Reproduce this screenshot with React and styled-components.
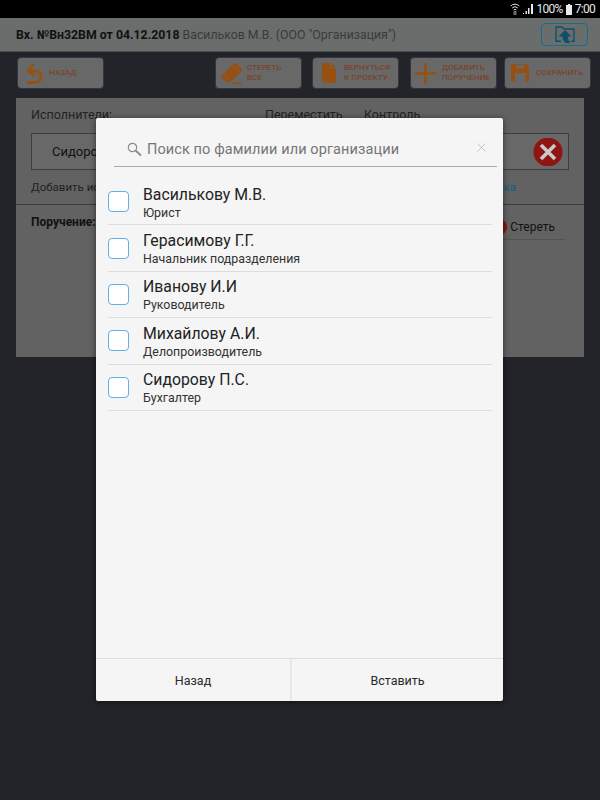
import React from 'react'
import styled, { createGlobalStyle } from 'styled-components'

const Global = createGlobalStyle`
  html, body {
    margin: 0;
    padding: 0;
    background: #22242a;
  }
  * { box-sizing: border-box; }
`;

const Page = styled.div`
  position: relative;
  width: 600px;
  height: 800px;
  overflow: hidden;
  background: #22242a;
  font-family: Roboto, "Liberation Sans", sans-serif;
  display: flex;
  flex-direction: column;
`;

const StatusBar = styled.div`
  height: 18px;
  background: #000;
  color: #e8e8e8;
  display: flex;
  align-items: center;
  justify-content: flex-end;
  gap: 3px;
  padding-right: 5px;
  font-size: 12px;
  letter-spacing: -0.7px;
`;

const Header = styled.div`
  height: 34px;
  background: #696d6c;
  border-bottom: 1px solid #4a4c4e;
  display: flex;
  align-items: center;
  justify-content: space-between;
  padding: 0 12px 0 16px;
`;

const Title = styled.div`
  font-size: 12.3px;
  color: #111;
  font-weight: 700;
  white-space: nowrap;
  span {
    font-weight: 400;
    color: #3a3a3a;
  }
`;

const FolderBtn = styled.div`
  width: 47px;
  height: 23px;
  border: 1px solid #1a6c8f;
  border-radius: 4px;
  display: flex;
  align-items: center;
  justify-content: center;
`;

const Toolbar = styled.div`
  display: flex;
  padding: 5px 9px 0 17px;
`;

const ToolBtn = styled.div`
  width: 87px;
  height: 32px;
  margin-left: ${p => p.$left || 0}px;
  margin-right: ${p => (p.$first ? 'auto' : '0')};
  background: #686868;
  border: 1px solid #33353f;
  border-radius: 4px;
  display: flex;
  align-items: center;
  gap: ${p => p.$gap || 4}px;
  padding-left: ${p => p.$pad || 5}px;
`;

const ToolText = styled.div`
  font-size: 8px;
  line-height: 10px;
  letter-spacing: 0.1px;
  color: #7e3a18;
`;

const Panel = styled.div`
  margin: 9px 16px 0;
  height: 259px;
  background: #626262;
  display: flex;
  flex-direction: column;
`;

const ColumnsRow = styled.div`
  display: flex;
  padding: 9px 0 0 15px;
  height: 35px;
  font-size: 12.5px;
  color: #222;
`;

const ColumnLabel = styled.div`
  width: ${p => p.$width}px;
`;

const ExecutorBox = styled.div`
  margin: 0 15px;
  height: 37px;
  border: 1px solid #3e3e3e;
  background: #686868;
  display: flex;
  align-items: center;
  justify-content: space-between;
  padding: 0 5px 0 20px;
  font-size: 13px;
  color: #111;
`;

const AddRow = styled.div`
  display: flex;
  justify-content: space-between;
  padding: 10px 68px 0 15px;
  height: 35px;
  font-size: 11.5px;
  color: #222;
  border-bottom: 1px solid #3c3c3c;
`;

const AddLink = styled.span`
  color: #0d5f7f;
`;

const OrderRow = styled.div`
  display: flex;
  justify-content: space-between;
  padding: 10px 19px 0 15px;
  font-size: 12px;
  color: #111;
`;

const OrderTitle = styled.div`
  font-weight: 700;
`;

const EraseBlock = styled.div`
  width: 76px;
  height: 25px;
  padding-right: 10px;
  border-bottom: 1px solid #545454;
  display: flex;
  align-items: center;
  justify-content: flex-end;
  gap: 3px;
  font-size: 12px;
`;

const Dot = styled.div`
  width: 16px;
  height: 16px;
  border-radius: 50%;
  background: #8f1414;
`;

const Modal = styled.div`
  position: absolute;
  left: 96px;
  top: 118px;
  width: 407px;
  height: 583px;
  background: #f5f5f5;
  border-radius: 2px;
  box-shadow: 0 1px 6px rgba(0, 0, 0, 0.55);
  display: flex;
  flex-direction: column;
`;

const SearchBar = styled.div`
  margin: 14px 6px 0 18px;
  height: 35px;
  border-bottom: 1px solid #a8a8a8;
  display: flex;
  align-items: center;
  padding: 0 11px 0 13px;
  gap: 5px;
  font-size: 14.5px;
  letter-spacing: 0.1px;
  color: #757575;
`;

const SearchText = styled.div`
  flex: 1;
`;

const List = styled.div`
  flex: 1;
  padding: 12px 11px 0 12px;
`;

const Row = styled.div`
  height: 46.4px;
  padding-top: 2px;
  border-bottom: 1px solid #dcdcdc;
  display: flex;
  align-items: center;
  gap: 14px;
`;

const CheckBox = styled.div`
  width: 21px;
  height: 21px;
  margin-top: -2px;
  border: 1px solid #5fb0e6;
  border-radius: 4px;
  background: #fff;
`;

const Name = styled.div`
  font-size: 15.8px;
  line-height: 19px;
  color: #222;
`;

const Role = styled.div`
  font-size: 12.4px;
  line-height: 17px;
  color: #333;
`;

const Footer = styled.div`
  height: 43px;
  border-top: 1px solid #dedede;
  display: flex;
`;

const FooterBtn = styled.div`
  width: ${p => p.$width}px;
  flex: ${p => (p.$width ? 'none' : 1)};
  display: flex;
  align-items: center;
  justify-content: center;
  font-size: 12.5px;
  color: #2a2a2a;
  border-right: ${p => (p.$width ? '2px solid #e8e8e8' : 'none')};
`;

const orange = '#97500f'
const btnBg = '#686868'

const BackIcon = () => (
  <svg width="17" height="21" viewBox="0 0 17 21">
    <path d="M7.5 1 L2 7.5 L8.5 13" fill="none" stroke={orange} strokeWidth="2.6" />
    <path d="M3 8 H9.5 a5.5 5.5 0 0 1 0 11.5 H1" fill="none" stroke={orange} strokeWidth="2.8" />
  </svg>
)

const EraserIcon = () => (
  <svg width="22" height="21" viewBox="0 0 22 21">
    <path d="M0.5 13 L12.5 1 a2 2 0 0 1 3 0 L20.5 5.5 a2 2 0 0 1 0 3 L8.5 19.5 a1.5 1.5 0 0 1 -2 0 L0.5 15 Z" fill={orange} />
    <path d="M3 11.5 L8.5 17 M11.5 3 L18 8.5" stroke={btnBg} strokeWidth="0.8" fill="none" />
    <path d="M11 20.2 H21" stroke={orange} strokeWidth="1.4" />
  </svg>
)

const DocIcon = () => (
  <svg width="14" height="20" viewBox="0 0 14 20">
    <path d="M0 0 H8 V5.5 H14 V17 a3 3 0 0 1 -3 3 H0 Z" fill={orange} />
    <path d="M9 0 L14 4.5 H9 Z" fill={orange} />
    <path d="M0 15.5 a4.5 4.5 0 0 1 4.5 4.5 M0 18 a2 2 0 0 1 2 2" fill="none" stroke={btnBg} strokeWidth="0.9" />
  </svg>
)

const PlusIcon = () => (
  <svg width="21" height="21" viewBox="0 0 21 21">
    <path d="M10.5 0 V21 M0 10.5 H21" stroke={orange} strokeWidth="2.6" />
  </svg>
)

const SaveIcon = () => (
  <svg width="18" height="18" viewBox="0 0 18 18">
    <path d="M2 0 H15 L18 3 V16 a2 2 0 0 1 -2 2 H2 a2 2 0 0 1 -2 -2 V2 a2 2 0 0 1 2 -2 Z" fill={orange} />
    <rect x="5" y="1" width="8" height="3.5" fill={btnBg} />
    <rect x="4" y="9" width="10.5" height="9" fill={btnBg} />
  </svg>
)

const FolderIcon = () => (
  <svg width="20" height="17" viewBox="0 0 20 17">
    <path d="M6 15.3 H1 V1 H7 L9 3 H19 V15.3 H16" fill="none" stroke="#0f4f6b" strokeWidth="1.4" />
    <path d="M10 4 L16.5 10.5 H13 C13 13 13.5 15 15.5 17 H11 C8 15 7.5 13 7.5 10.5 H3.5 Z" fill="#0f4f6b" />
  </svg>
)

const WifiIcon = () => (
  <svg width="10" height="12" viewBox="0 0 10 12">
    <path d="M0.7 3 a6 6 0 0 1 8.6 0 M2.2 5 a4 4 0 0 1 5.6 0 M3.6 7 a2 2 0 0 1 2.8 0" fill="none" stroke="#ddd" strokeWidth="1" />
    <path d="M3.5 9 h3 M3.5 11 h3" stroke="#ddd" strokeWidth="1" />
  </svg>
)

const SignalIcon = () => (
  <svg width="10" height="10" viewBox="0 0 10 10">
    <path d="M0 9 h1 v1 h-1 Z M2.5 7 h1.5 v3 h-1.5 Z M5 4 h1.5 v6 h-1.5 Z M8 0 h2 v10 h-2 Z" fill="#e8e8e8" />
  </svg>
)

const BatteryIcon = () => (
  <svg width="6" height="11" viewBox="0 0 6 11">
    <path d="M2 0 h2 v1 h2 v10 h-6 v-10 h2 Z" fill="#e8e8e8" />
  </svg>
)

const SearchIcon = () => (
  <svg width="15" height="15" viewBox="0 0 15 15">
    <circle cx="5.5" cy="5.5" r="4.2" fill="none" stroke="#8c8c8c" strokeWidth="1.2" />
    <path d="M8.8 8.8 L14 13.5" stroke="#8c8c8c" strokeWidth="2" />
  </svg>
)

const ClearIcon = () => (
  <svg width="9" height="9" viewBox="0 0 9 9" style={{ marginBottom: 4 }}>
    <path d="M0.5 0.5 L8.5 8.5 M8.5 0.5 L0.5 8.5" stroke="#c4c4c4" strokeWidth="1" />
  </svg>
)

const RemoveIcon = () => (
  <svg width="30" height="28" viewBox="0 0 30 28">
    <circle cx="15" cy="14" r="14.5" fill="#8f1414" />
    <path d="M8 7 L22 21 M22 7 L8 21" stroke="#c9c9c9" strokeWidth="3.6" />
  </svg>
)

const people = [
  { name: 'Василькову М.В.', role: 'Юрист' },
  { name: 'Герасимову Г.Г.', role: 'Начальник подразделения' },
  { name: 'Иванову И.И', role: 'Руководитель' },
  { name: 'Михайлову А.И.', role: 'Делопроизводитель' },
  { name: 'Сидорову П.С.', role: 'Бухгалтер' },
]

const App = () => {
  return (
    <Page>
      <Global />
      <StatusBar>
        <WifiIcon />
        <SignalIcon />
        <span>100%</span>
        <BatteryIcon />
        <span>7:00</span>
      </StatusBar>
      <Header>
        <Title>
          Вх. №Вн32ВМ от 04.12.2018 <span>Васильков М.В. (ООО "Организация")</span>
        </Title>
        <FolderBtn><FolderIcon /></FolderBtn>
      </Header>
      <Toolbar>
        <ToolBtn $first $pad={8} $gap={6}>
          <BackIcon />
          <ToolText>НАЗАД</ToolText>
        </ToolBtn>
        <ToolBtn $pad={5} $gap={4}>
          <EraserIcon />
          <ToolText>СТЕРЕТЬ<br />ВСЕ</ToolText>
        </ToolBtn>
        <ToolBtn $left={10} $pad={9} $gap={8}>
          <DocIcon />
          <ToolText>ВЕРНУТЬСЯ<br />К ПРОЕКТУ</ToolText>
        </ToolBtn>
        <ToolBtn $left={11} $pad={4} $gap={6}>
          <PlusIcon />
          <ToolText>ДОБАВИТЬ<br />ПОРУЧЕНИЕ</ToolText>
        </ToolBtn>
        <ToolBtn $left={7} $pad={6} $gap={7}>
          <SaveIcon />
          <ToolText>СОХРАНИТЬ</ToolText>
        </ToolBtn>
      </Toolbar>
      <Panel>
        <ColumnsRow>
          <ColumnLabel $width={234}>Исполнители:</ColumnLabel>
          <ColumnLabel $width={99}>Переместить</ColumnLabel>
          <ColumnLabel $width={80}>Контроль</ColumnLabel>
        </ColumnsRow>
        <ExecutorBox>
          <span>Сидоров П.С.</span>
          <RemoveIcon />
        </ExecutorBox>
        <AddRow>
          <span>Добавить исполнителя</span>
          <AddLink>Выбрать из списка</AddLink>
        </AddRow>
        <OrderRow>
          <OrderTitle>Поручение:</OrderTitle>
          <EraseBlock>
            <Dot />
            Стереть
          </EraseBlock>
        </OrderRow>
      </Panel>
      <Modal>
        <SearchBar>
          <SearchIcon />
          <SearchText>Поиск по фамилии или организации</SearchText>
          <ClearIcon />
        </SearchBar>
        <List>
          {people.map(p => (
            <Row key={p.name}>
              <CheckBox />
              <div>
                <Name>{p.name}</Name>
                <Role>{p.role}</Role>
              </div>
            </Row>
          ))}
        </List>
        <Footer>
          <FooterBtn $width={196}>Назад</FooterBtn>
          <FooterBtn>Вставить</FooterBtn>
        </Footer>
      </Modal>
    </Page>
  )
}

export default App
